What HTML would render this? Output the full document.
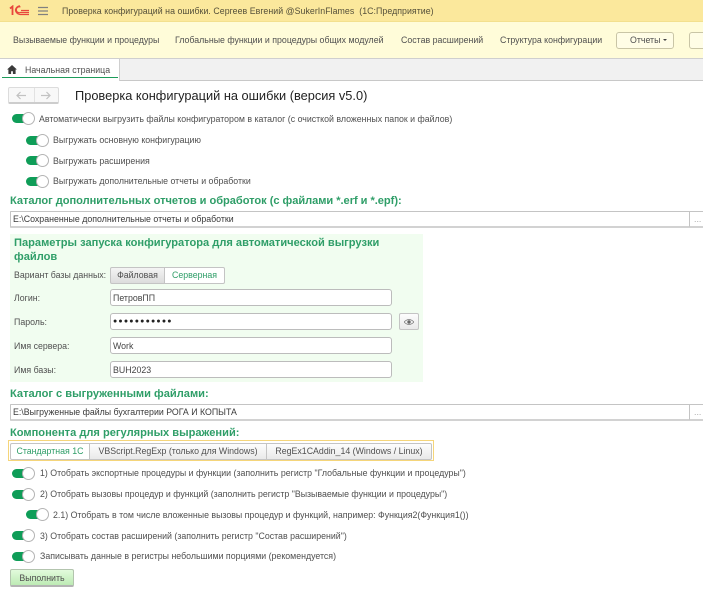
<!DOCTYPE html>
<html lang="ru"><head><meta charset="utf-8"><title>Проверка конфигураций на ошибки</title>
<style>
html,body{margin:0;padding:0;background:#fff}
#p{position:relative;width:703px;height:600px;overflow:hidden;background:#fff;font-family:"Liberation Sans",Arial,sans-serif;font-size:8.8px;color:#505050;filter:blur(.35px)}
#p div{position:absolute;white-space:nowrap;box-sizing:border-box}
.t{line-height:12px;height:12px}
.h{font-weight:bold;font-size:11.1px;color:#2f9e68;line-height:13px;height:13px}
.tg{width:24px;height:13px}
.tg i{position:absolute;left:1px;top:2px;width:16px;height:9px;background:#0f9d58;border-radius:5px;display:block}
.tg b{position:absolute;left:11px;top:0;width:13px;height:13px;border-radius:50%;background:#fff;border:1px solid #b4b4b4;box-sizing:border-box;display:block}
.in{background:#fff;border:1px solid #c4c4c4;border-bottom:2px solid #d2d2d2;border-radius:1px;height:17px;line-height:14px;padding-left:2px;color:#3a3a3a}
.f{background:#fff;border:1px solid #bcbcbc;border-radius:3px;height:17px;line-height:16px;padding-left:2px;color:#444;left:110px;width:282px}
.b{text-align:center;border:1px solid #c4c4c4;background:linear-gradient(#fdfdfd,#e9e9e9);line-height:16px}
</style></head><body><div id="p">
<div style="left:0;top:0;width:703px;height:21px;background:#fbe89c"></div>
<div style="left:0;top:21px;width:703px;height:37px;background:#fffcd9;border-top:1px solid #f3e08e"></div>
<div style="left:0;top:58px;width:703px;height:1px;background:#cfcfcf"></div>
<div style="left:0;top:59px;width:703px;height:21px;background:#f1f1f1"></div>
<div style="left:0;top:80px;width:703px;height:1px;background:#c8c8c8"></div>
<div style="left:0;top:59px;width:120px;height:22px;background:#fff;border-right:1px solid #cfcfcf"></div>
<div style="left:2px;top:77px;width:116px;height:1px;background:#1c9c5a"></div>

<svg style="position:absolute;left:9px;top:5px" width="21" height="11" viewBox="0 0 21 11" fill="none" stroke="#e8463c"><path d="M1 3.500 3.500 1.500V10" stroke-width="1.8"/><path d="M20 7.500H11.500a3 3 0 1 1 0-5.500M20 9.500H11a5 5 0 0 1-4.600-4.500A5 5 0 0 1 11 .8M20 5.500h-8" stroke-width="1.2"/></svg>
<svg style="position:absolute;left:38px;top:6px" width="11" height="10" viewBox="0 0 11 10" fill="none" stroke="#808080" stroke-width="1.2"><path d="M0 1.500h10M0 5h10M0 8.500h10"/></svg>
<div class="t" style="left:62px;top:5px;color:#55503a;letter-spacing:.04px">Проверка конфигураций на ошибки. Сергеев Евгений @SukerInFlames&nbsp; (1С:Предприятие)</div>

<div class="t" style="left:13px;top:34px">Вызываемые функции и процедуры</div>
<div class="t" style="left:175px;top:34px">Глобальные функции и процедуры общих модулей</div>
<div class="t" style="left:401px;top:34px">Состав расширений</div>
<div class="t" style="left:500px;top:34px">Структура конфигурации</div>
<div style="left:616px;top:32px;width:58px;height:17px;border:1px solid #c9c5a6;border-radius:3px;background:#fffde6"></div>
<div class="t" style="left:630px;top:34px">Отчеты</div>
<div style="left:663px;top:39px;width:0;height:0;border:2px solid transparent;border-top:2px solid #444"></div>
<div style="left:689px;top:32px;width:30px;height:17px;border:1px solid #c9c5a6;border-radius:3px;background:#fffde6"></div>

<svg style="position:absolute;left:7px;top:65px" width="10" height="9" viewBox="0 0 11 10"><path d="M5.500 0 0 5h1.500v5h3V7h2v3h3V5H11z" fill="#3a3a3a"/></svg>
<div class="t" style="left:25px;top:64px">Начальная страница</div>

<div style="left:8px;top:87px;width:51px;height:17px;border:1px solid #dcdcdc;border-bottom:2px solid #cdcdcd;border-radius:2px;background:#f8f8f8"></div>
<div style="left:34px;top:88px;width:1px;height:14px;background:#e2e2e2"></div>
<svg style="position:absolute;left:16px;top:91px" width="40" height="9" viewBox="0 0 40 9" fill="none" stroke="#c2c2c2" stroke-width="1.2"><path d="M10 4.500H1M4.500 1 1 4.500 4.500 8M25 4.500h9M30.500 1 34 4.500 30.500 8"/></svg>
<div style="left:75px;top:88px;font-size:12.8px;line-height:15px;color:#222">Проверка конфигураций на ошибки (версия v5.0)</div>

<div class="tg" style="left:11px;top:112px"><i></i><b></b></div>
<div class="t" style="left:39px;top:113px">Автоматически выгрузить файлы конфигуратором в каталог (с очисткой вложенных папок и файлов)</div>
<div class="tg" style="left:25px;top:134px"><i></i><b></b></div>
<div class="t" style="left:53px;top:134px">Выгружать основную конфигурацию</div>
<div class="tg" style="left:25px;top:154px"><i></i><b></b></div>
<div class="t" style="left:53px;top:155px">Выгружать расширения</div>
<div class="tg" style="left:25px;top:175px"><i></i><b></b></div>
<div class="t" style="left:53px;top:175px">Выгружать дополнительные отчеты и обработки</div>

<div class="h" style="left:10px;top:195px;letter-spacing:-.04px">Каталог дополнительных отчетов и обработок (с файлами *.erf и *.epf):</div>
<div class="in" style="left:10px;top:211px;width:680px">E:\Сохраненные дополнительные отчеты и обработки</div>
<div class="in" style="left:689px;top:211px;width:20px;color:#aaa;padding-left:4px">...</div>

<div style="left:10px;top:234px;width:413px;height:148px;background:#f1fdf0"></div>
<div class="h" style="left:14px;top:237px">Параметры запуска конфигуратора для автоматической выгрузки</div>
<div class="h" style="left:14px;top:251px">файлов</div>
<div class="t" style="left:14px;top:269px">Вариант базы данных:</div>
<div class="b" style="left:110px;top:267px;width:55px;height:17px;border-radius:2px 0 0 2px;background:linear-gradient(#f4f4f4,#dcdcdc);line-height:15px">Файловая</div>
<div class="b" style="left:164px;top:267px;width:61px;height:17px;border-radius:0 2px 2px 0;background:#fff;color:#2f9e68;line-height:15px">Серверная</div>
<div class="t" style="left:14px;top:292px">Логин:</div>
<div class="f" style="top:289px">ПетровПП</div>
<div class="t" style="left:14px;top:316px">Пароль:</div>
<div class="f" style="top:313px;color:#222;font-size:7px;letter-spacing:1.2px">●●●●●●●●●●●</div>
<div class="b" style="left:399px;top:313px;width:20px;height:17px;border-radius:2px"></div>
<svg style="position:absolute;left:404px;top:319px" width="10" height="6" viewBox="0 0 10 6"><path d="M0 3Q5-2 10 3 5 8 0 3z" fill="none" stroke="#777" stroke-width=".8"/><circle cx="5" cy="3" r="1.700" fill="#666"/></svg>
<div class="t" style="left:14px;top:340px">Имя сервера:</div>
<div class="f" style="top:337px">Work</div>
<div class="t" style="left:14px;top:364px">Имя базы:</div>
<div class="f" style="top:361px">BUH2023</div>

<div class="h" style="left:10px;top:388px">Каталог с выгруженными файлами:</div>
<div class="in" style="left:10px;top:404px;width:680px">E:\Выгруженные файлы бухгалтерии РОГА И КОПЫТА</div>
<div class="in" style="left:689px;top:404px;width:20px;color:#aaa;padding-left:4px">...</div>

<div class="h" style="left:10px;top:427px">Компонента для регулярных выражений:</div>
<div style="left:8px;top:440px;width:426px;height:21px;border:1px solid #f5d57a;background:#fff"></div>
<div class="b" style="left:10px;top:443px;width:80px;height:17px;background:#fff;color:#2f9e68;border-radius:2px 0 0 2px;line-height:15px">Стандартная 1С</div>
<div class="b" style="left:89px;top:443px;width:178px;height:17px;line-height:15px">VBScript.RegExp (только для Windows)</div>
<div class="b" style="left:266px;top:443px;width:166px;height:17px;border-radius:0 2px 2px 0;line-height:15px">RegEx1CAddin_14 (Windows / Linux)</div>

<div class="tg" style="left:11px;top:467px"><i></i><b></b></div>
<div class="t" style="left:40px;top:467px">1) Отобрать экспортные процедуры и функции (заполнить регистр "Глобальные функции и процедуры")</div>
<div class="tg" style="left:11px;top:488px"><i></i><b></b></div>
<div class="t" style="left:40px;top:488px">2) Отобрать вызовы процедур и функций (заполнить регистр "Вызываемые функции и процедуры")</div>
<div class="tg" style="left:25px;top:508px"><i></i><b></b></div>
<div class="t" style="left:53px;top:509px">2.1) Отобрать в том числе вложенные вызовы процедур и функций, например: Функция2(Функция1())</div>
<div class="tg" style="left:11px;top:529px"><i></i><b></b></div>
<div class="t" style="left:40px;top:530px">3) Отобрать состав расширений (заполнить регистр "Состав расширений")</div>
<div class="tg" style="left:11px;top:550px"><i></i><b></b></div>
<div class="t" style="left:40px;top:550px">Записывать данные в регистры небольшими порциями (рекомендуется)</div>
<div class="b" style="left:10px;top:569px;width:64px;height:18px;border-radius:2px;background:linear-gradient(#e2fbdc,#bdeab4);border-color:#b3c4ae;border-bottom:2px solid #b3b3b3">Выполнить</div>
</div></body></html>
